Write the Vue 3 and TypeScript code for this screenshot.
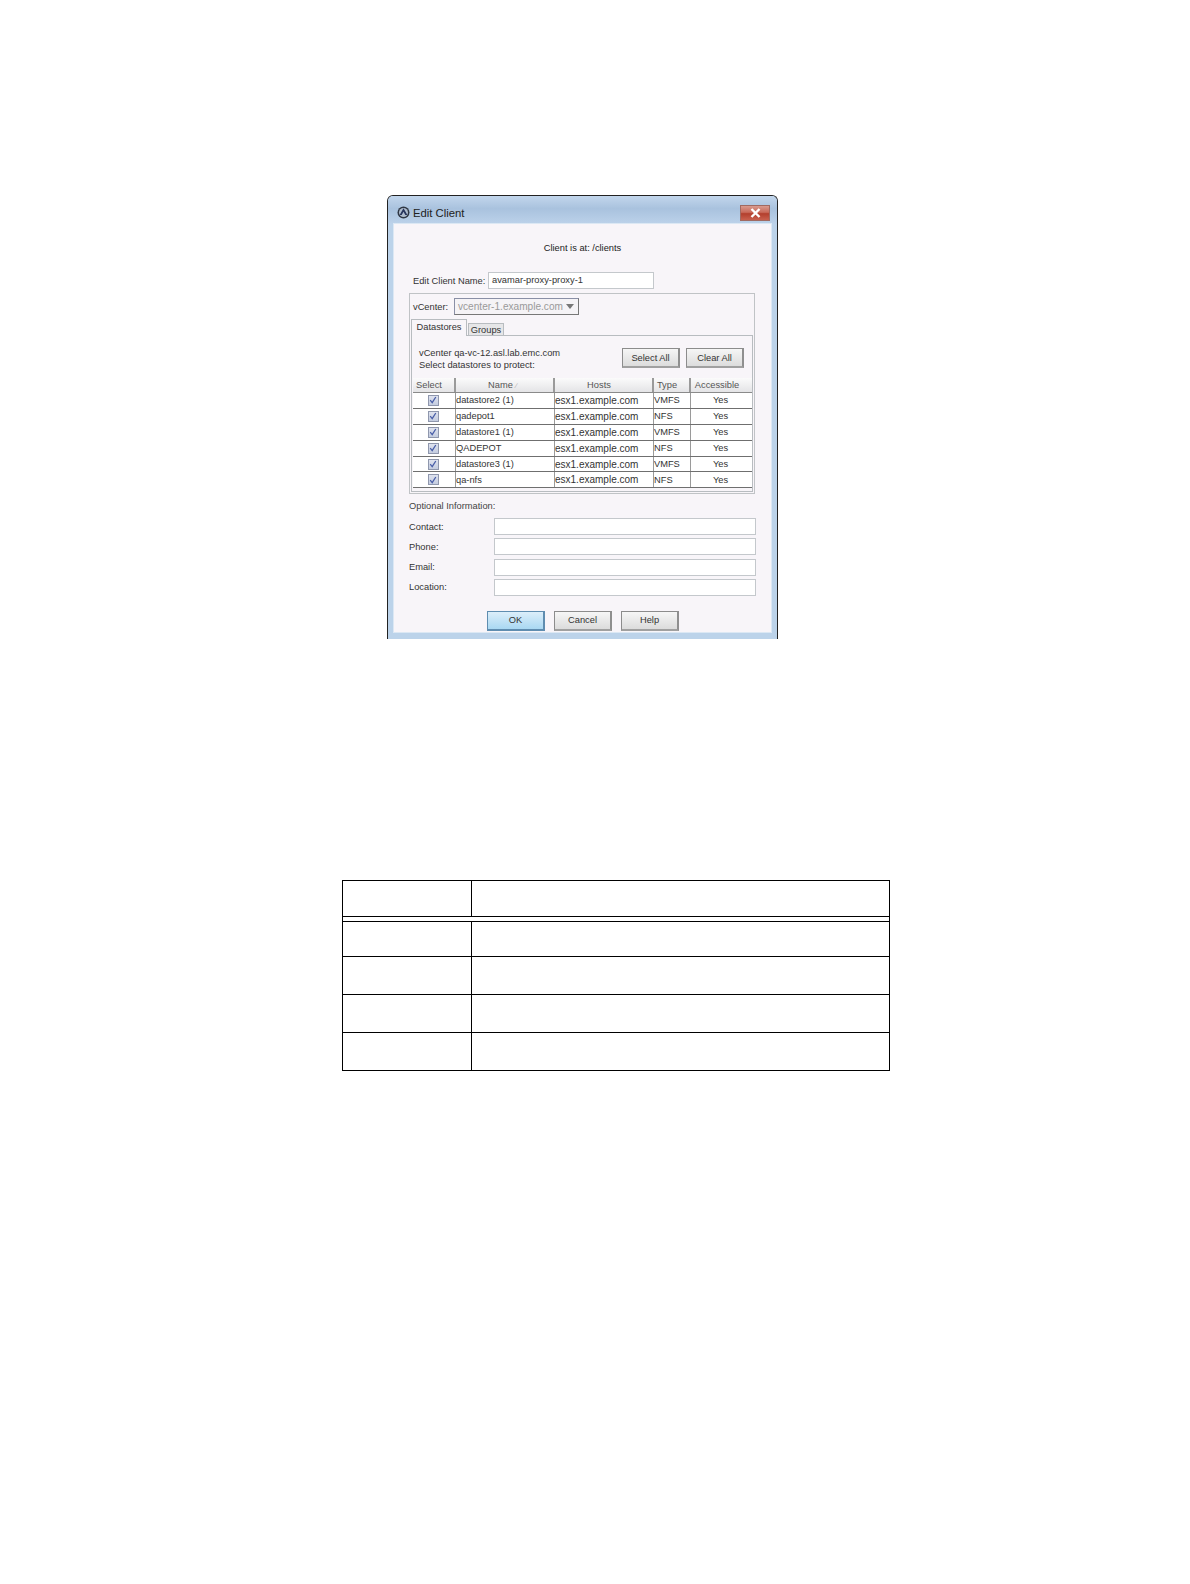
<script setup lang="ts">
interface Row { name: string; host: string; type: string; acc: string }
const rows: Row[] = [
  { name: 'datastore2 (1)', host: 'esx1.example.com', type: 'VMFS', acc: 'Yes' },
  { name: 'qadepot1', host: 'esx1.example.com', type: 'NFS', acc: 'Yes' },
  { name: 'datastore1 (1)', host: 'esx1.example.com', type: 'VMFS', acc: 'Yes' },
  { name: 'QADEPOT', host: 'esx1.example.com', type: 'NFS', acc: 'Yes' },
  { name: 'datastore3 (1)', host: 'esx1.example.com', type: 'VMFS', acc: 'Yes' },
  { name: 'qa-nfs', host: 'esx1.example.com', type: 'NFS', acc: 'Yes' },
]
const fields: string[] = ['Contact:', 'Phone:', 'Email:', 'Location:']
</script>

<template>
  <div class="page">
    <div class="win">
      <div class="titlebar">
        <svg class="logo" width="13" height="13" viewBox="0 0 13 13">
          <circle cx="6.5" cy="6.5" r="6" fill="#2f3744" />
          <circle cx="6.5" cy="6.5" r="4.5" fill="#aebccd" />
          <path d="M6.5 2.2 L10.4 9 L8.3 9 L6.5 5.8 L4.7 9 L2.6 9 Z" fill="#26345c" />
        </svg>
        <span class="title">Edit Client</span>
        <div class="close">
          <svg width="11" height="10" viewBox="0 0 11 10">
            <path d="M1.5 1 L9.5 9 M9.5 1 L1.5 9" stroke="#fff" stroke-width="2.4" />
          </svg>
        </div>
      </div>
      <div class="body">
        <div class="where">Client is at: /clients</div>
        <div class="namerow">
          <span class="namelabel">Edit Client Name:</span>
          <div class="input nameinput">avamar-proxy-proxy-1</div>
        </div>
        <div class="group">
          <div class="vrow">
            <span>vCenter:</span>
            <div class="combo">
              <span>vcenter-1.example.com</span>
              <i class="caret"></i>
            </div>
          </div>
          <div class="tabs">
            <div class="tab active">Datastores</div>
            <div class="tab">Groups</div>
          </div>
          <div class="tabpanel">
            <div class="panelhead">
              <div class="paneltext">
                <div>vCenter qa-vc-12.asl.lab.emc.com</div>
                <div>Select datastores to protect:</div>
              </div>
              <div class="btns">
                <div class="btn small">Select All</div>
                <div class="btn small">Clear All</div>
              </div>
            </div>
            <div class="grid">
              <div class="gridrow head">
                <div class="cell c1">Select</div>
                <div class="cell c2">Name <span class="sort">∕</span></div>
                <div class="cell c3">Hosts</div>
                <div class="cell c4">Type</div>
                <div class="cell c5">Accessible</div>
              </div>
              <div v-for="r in rows" :key="r.name" class="gridrow">
                <div class="cell c1 box">
                  <div class="check">
                    <svg width="8" height="8" viewBox="0 0 8 8">
                      <path d="M1.2 4.2 L3.2 6.6 L6.8 1" fill="none" stroke="#4a5fa8" stroke-width="1.3" />
                    </svg>
                  </div>
                </div>
                <div class="cell c2 left">{{ r.name }}</div>
                <div class="cell c3 left">{{ r.host }}</div>
                <div class="cell c4 left">{{ r.type }}</div>
                <div class="cell c5 yes">{{ r.acc }}</div>
              </div>
            </div>
          </div>
        </div>
        <div class="optional">Optional Information:</div>
        <div class="fields">
          <div v-for="f in fields" :key="f" class="field">
            <span class="flabel">{{ f }}</span>
            <div class="input finput"></div>
          </div>
        </div>
        <div class="actions">
          <div class="btn big ok">OK</div>
          <div class="btn big">Cancel</div>
          <div class="btn big">Help</div>
        </div>
      </div>
    </div>

    <div class="doctable">
      <div class="dhead">
        <div class="dc dc1"></div>
        <div class="dc"></div>
      </div>
      <div class="drow r1">
        <div class="dc dc1"></div>
        <div class="dc"></div>
      </div>
      <div class="drow r2">
        <div class="dc dc1"></div>
        <div class="dc"></div>
      </div>
      <div class="drow r3">
        <div class="dc dc1"></div>
        <div class="dc"></div>
      </div>
      <div class="drow r4">
        <div class="dc dc1"></div>
        <div class="dc"></div>
      </div>
    </div>
  </div>
</template>

<style>
html, body { margin: 0; background: #fff; }
</style>

<style scoped>
.page {
  width: 1190px;
  height: 1584px;
  background: #fff;
  padding-top: 195px;
  box-sizing: border-box;
  overflow: hidden;
  font-family: "Liberation Sans", Arial, sans-serif;
  font-size: 9.3px;
  color: #333;
}
.win {
  width: 391px;
  height: 444px;
  margin-left: 387px;
  box-sizing: border-box;
  border: 1px solid #222;
  border-bottom: 0;
  border-radius: 6px 6px 0 0;
  background: #bcd3ea;
  padding: 0 6px 0 6px;
  display: flex;
  flex-direction: column;
}
.titlebar {
  height: 28px;
  box-sizing: border-box;
  margin: 0 -6px;
  padding: 5px 7px 0 9px;
  display: flex;
  align-items: center;
  background: linear-gradient(#c2d6ec, #a9c2de 45%, #bcd2ea);
  flex: none;
  border-radius: 5px 5px 0 0;
}
.logo { flex: none; }
.title { margin-left: 3px; font-size: 11.3px; color: #222; }
.close {
  margin-left: auto;
  width: 30px;
  height: 16px;
  box-sizing: border-box;
  border: 1px solid #a06a62;
  background: linear-gradient(#d99a8e, #c96a5a 45%, #b33f2d 55%, #c9604e);
  display: flex;
  align-items: center;
  justify-content: center;
}
.body {
  height: 408px;
  flex: none;
  background: #f8f5f9;
  box-shadow: 0 0 0 1px #dce8f4;
  padding: 0 0 0 15px;
  display: flex;
  flex-direction: column;
}
.where { text-align: center; padding-top: 19px; line-height: 11px; color: #222; padding-right: 15px; }
.namerow { display: flex; align-items: center; margin-top: 18px; padding-left: 4px; }
.namelabel { width: 75px; flex: none; color: #333; }
.input { background: #fff; border: 1px solid #c4c8cc; box-sizing: border-box; }
.nameinput { width: 166px; height: 17px; line-height: 15px; padding-left: 3px; color: #333; }
.group {
  margin-top: 4px;
  border: 1px solid #c0c3c6;
  width: 346px;
  height: 201px;
  box-sizing: border-box;
  padding: 4px 0 0 0;
}
.vrow { display: flex; align-items: center; padding-left: 3px; }
.vrow > span { width: 41px; flex: none; }
.combo {
  width: 125px;
  height: 17px;
  box-sizing: border-box;
  border: 1px solid #8a8fa6;
  border-right-color: #777;
  border-bottom-color: #777;
  background: #f5f3f6;
  color: #9a9a9a;
  font-size: 10.1px;
  padding: 0 4px 0 3px;
  display: flex;
  align-items: center;
  justify-content: space-between;
}
.caret {
  width: 0;
  height: 0;
  border-left: 4px solid transparent;
  border-right: 4px solid transparent;
  border-top: 5px solid #777;
}
.tabs { display: flex; margin-top: 4px; height: 16px; padding-left: 1px; }
.tab {
  border: 1px solid #b8bcc0;
  border-bottom: 0;
  background: #e6e6e8;
  margin-top: 4px;
  width: 36px;
  box-sizing: border-box;
  color: #333;
  text-align: center;
  line-height: 12px;
  margin-left: 1px;
}
.tab.active {
  background: #f8f5f9;
  margin-top: 0;
  margin-left: 0;
  width: 56px;
  height: 17px;
  line-height: 14px;
  position: relative;
  z-index: 1;
}
.tabpanel {
  border: 1px solid #b8bcc0;
  width: 342px;
  height: 157px;
  margin-left: 1px;
  box-sizing: border-box;
  padding: 0 0 0 1px;
}
.panelhead { display: flex; justify-content: space-between; padding: 12px 8px 0 6px; height: 42px; box-sizing: border-box; }
.paneltext { line-height: 11.5px; color: #333; }
.btns { display: flex; gap: 6px; }
.btn {
  box-sizing: border-box;
  display: flex;
  align-items: center;
  justify-content: center;
  border: 1px solid #8c8c8c;
  border-right: 2px solid #8f8f8f;
  border-bottom: 2px solid #a0a0a0;
  background: linear-gradient(#f6f6f6, #dcdcdc);
  color: #333;
}
.btn.small { width: 58px; height: 20px; }
.grid { display: flex; flex-direction: column; }
.gridrow { display: flex; height: 15.9px; border-bottom: 1px solid #6f6f6f; box-sizing: border-box; background: #fff; }
.gridrow.head { height: 15px; background: linear-gradient(#fbfbfb, #e4e4e6); border-bottom: 1px solid #8a8a8a; color: #444; }
.cell { display: flex; align-items: center; justify-content: center; border-right: 1px solid #9a9a9a; box-sizing: border-box; overflow: hidden; white-space: nowrap; color: #333; }
.head .cell { color: #555; padding-right: 9px; border-right: 2px solid #9a9a9a; }
.head .c2 { padding-right: 4px; }
.head .c3 { font-size: 9.3px; }
.cell.left { justify-content: flex-start; padding-left: 0; }
.cell.box { padding-right: 2px; }
.cell.yes { padding-right: 2px; }
.c1 { width: 43px; }
.c2 { width: 99px; }
.c3 { width: 99px; font-size: 10px; }
.c4 { width: 37px; }
.c5 { width: 61px; border-right: 0; }
.head .c5 { border-right: 0; }
.sort { color: #aaa; font-size: 7px; margin-left: 3px; }
.check {
  width: 11px;
  height: 11px;
  box-sizing: border-box;
  border: 1px solid #8f97ad;
  background: linear-gradient(#dfe3ee, #c4cce0);
  display: flex;
  align-items: center;
  justify-content: center;
}
.optional { margin-top: 7px; line-height: 11px; color: #444; }
.fields { margin-top: 6px; display: flex; flex-direction: column; gap: 3.3px; }
.field { display: flex; align-items: center; height: 17px; }
.flabel { width: 85px; flex: none; color: #333; }
.finput { width: 262px; height: 17px; }
.actions { display: flex; gap: 9px; margin-top: 15px; padding-left: 78px; }
.btn.big { width: 58px; height: 20px; }
.btn.ok { background: linear-gradient(#dceefa, #a9d8f2); border-color: #5f8db0; }

.doctable {
  width: 548px;
  margin-left: 342px;
  margin-top: 241px;
  box-sizing: border-box;
  border: 1px solid #000;
}
.dhead { display: flex; height: 35px; border-bottom: 1px solid #000; }
.drow { display: flex; border-top: 1px solid #000; box-sizing: border-box; }
.dhead + .drow { margin-top: 4px; }
.r1 { height: 35px; }
.r2 { height: 38px; }
.r3 { height: 38px; }
.r4 { height: 38px; }
.dc { flex: 1; }
.dc1 { flex: none; width: 129px; border-right: 1px solid #000; box-sizing: border-box; }
</style>
